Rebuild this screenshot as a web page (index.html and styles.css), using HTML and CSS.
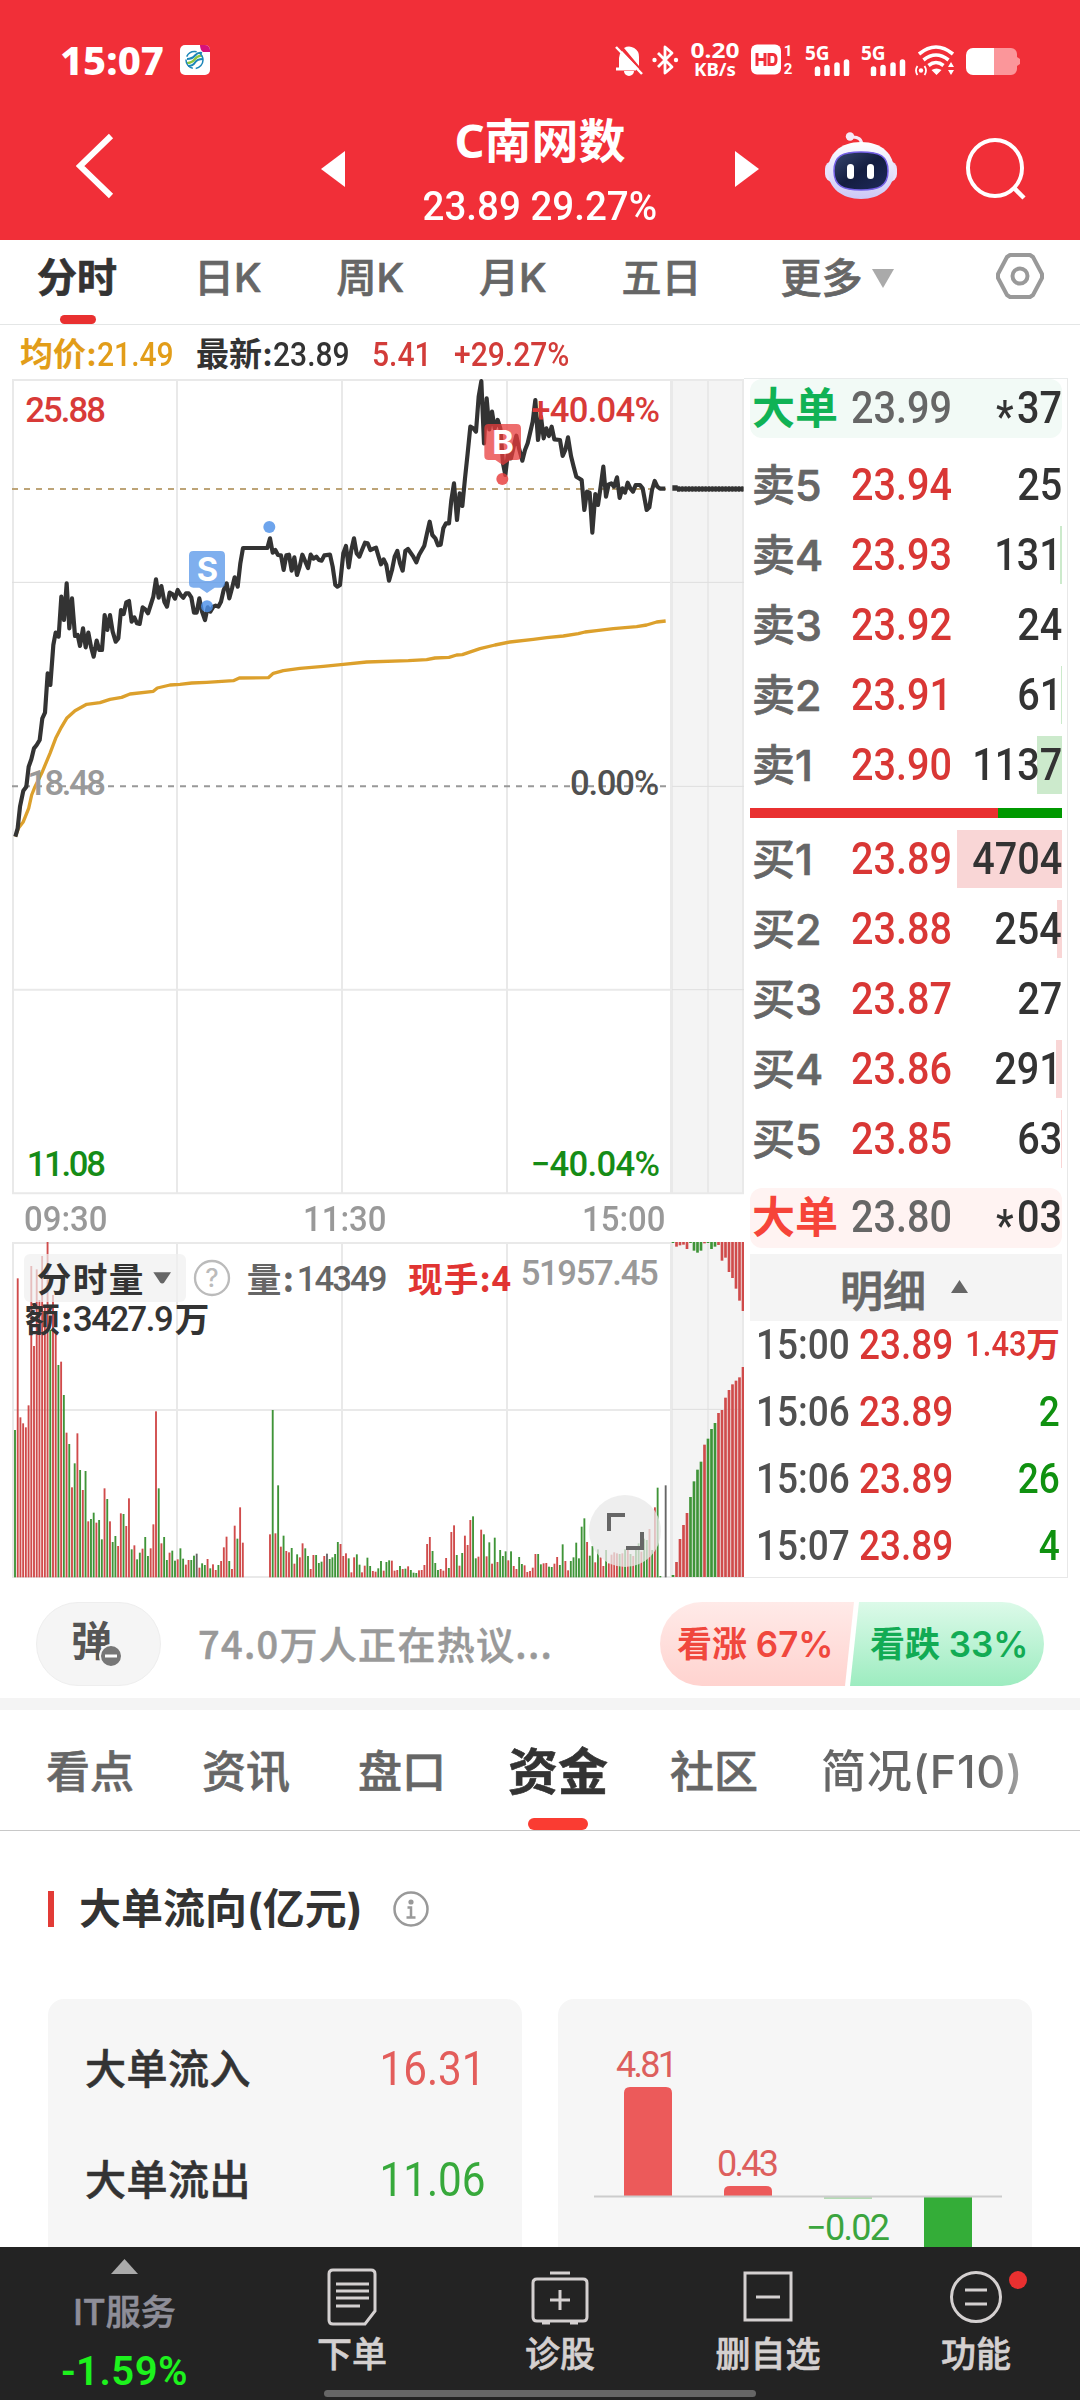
FILE: index.html
```html
<!DOCTYPE html>
<html lang="zh-CN">
<head>
    <meta charset="UTF-8">
    <meta name="viewport" content="width=device-width, initial-scale=1.0">
    <title>C南网数</title>
    <link rel="stylesheet" href="styles.css">
</head>
<body>
    <header class="header">
        <div class="status-bar">
            <span class="clock">15:07</span>
            <svg class="app-icon" width="30" height="30" viewBox="0 0 30 30">
                <rect width="30" height="30" rx="5" fill="#fff"/>
                <path d="M20 0h5a5 5 0 0 1 5 5v2h-7q-3-2-3-7z" fill="#d6127a"/>
                <path d="M7 14q5 0 8-3.500t7-2.500M8 21q5 0 7-3.500t8-3.500" stroke="#1c86b8" stroke-width="2" fill="none"/>
                <path d="M7 18q5 0 8-4t7-3" stroke="#8cc63f" stroke-width="2.200" fill="none"/>
                <circle cx="14.500" cy="15" r="8.500" fill="none" stroke="#1c86b8" stroke-width="1.500" stroke-dasharray="12 3"/>
            </svg>
            <div class="status-icons">
                <svg width="28" height="31" viewBox="0 0 28 31">
                    <path d="M4 24V13a10 10 0 0 1 3-7l17 18zM9 3a10 10 0 0 1 15 9v9zM9 26h10a5 5 0 0 1-10 0z" fill="#fff"/>
                    <path d="M1 24h20" stroke="#fff" stroke-width="3"/>
                    <path d="M1 2l26 27" stroke="#fff" stroke-width="2.500"/>
                </svg>
                <svg class="bt" width="27" height="31" viewBox="0 0 27 31">
                    <path d="M6 8l14 14-7 6V2l7 6L6 22" fill="none" stroke="#fff" stroke-width="2.800" stroke-linejoin="round"/>
                    <circle cx="2.500" cy="15" r="2.200" fill="#fff"/><circle cx="24" cy="15" r="2.200" fill="#fff"/>
                </svg>
                <svg class="speed" width="52" height="40" viewBox="0 0 52 40">
                    <text x="26" y="18" font-size="22" textLength="49" lengthAdjust="spacingAndGlyphs">0.20</text>
                    <text x="26" y="36" font-size="18" textLength="42" lengthAdjust="spacingAndGlyphs">KB/s</text>
                </svg>
                <svg class="hd" width="44" height="32" viewBox="0 0 44 32">
                    <rect width="30" height="30" rx="6" fill="#fff" y=".5"/>
                    <path d="M6 9v13M14 9v13M6 15.500h8M18 10.500h4q3 0 3 5t-3 5h-4z" stroke="#f12f38" stroke-width="3" fill="none"/>
                    <text x="37" y="12" class="sim">1</text><text x="37" y="30" class="sim">2</text>
                </svg>
                <svg class="sig" width="46" height="31" viewBox="0 0 46 31">
                    <text x="0" y="15" class="g5">5G</text>
                    <path d="M12.500 29v-5M22 29v-6.500M32 29V20M41.500 29V17" stroke="#fff" stroke-width="5.500" stroke-linecap="round"/>
                </svg>
                <svg class="sig" width="46" height="31" viewBox="0 0 46 31">
                    <text x="0" y="15" class="g5">5G</text>
                    <path d="M12.500 29v-5M22 29v-6.500M32 29V20M41.500 29V17" stroke="#fff" stroke-width="5.500" stroke-linecap="round"/>
                </svg>
                <svg class="wifi" width="40" height="31" viewBox="0 0 40 31">
                    <path d="M4 9q17-14 34 0M8.500 15q12.500-10 25 0M13.500 20.500q7.500-6 15 0" fill="none" stroke="#fff" stroke-width="3.600"/>
                    <path d="M16.500 25l5 5 5-5q-5-3-10 0zM33 22l3-5 3 5zM33 25l3 5 3-5z" fill="#fff"/>
                    <circle cx="6" cy="25.500" r="2.200" fill="#fff"/>
                    <path d="M2.500 21q-3 4.500 0 9M9.500 21q3 4.500 0 9" fill="none" stroke="#fff" stroke-width="1.800"/>
                </svg>
                <svg class="battery" width="54" height="31" viewBox="0 0 54 31">
                    <path d="M27 3h18a6 6 0 0 1 6 6v3l3 2v5l-3 2v3a6 6 0 0 1-6 6H27z" fill="#fb969a"/>
                    <path d="M28 3H7a7 7 0 0 0-7 7v13a7 7 0 0 0 7 7h21z" fill="#fff"/>
                </svg>
            </div>
        </div>
        <div class="title-bar">
            <svg class="back" width="38" height="66" viewBox="0 0 38 66"><path d="M35 3L4 33l31 30" fill="none" stroke="#fff" stroke-width="6"/></svg>
            <svg class="prev" width="24" height="36" viewBox="0 0 24 36"><path d="M24 0v36L0 18z" fill="#fff"/></svg>
            <div class="stock">
                <div class="stock-name">C南网数</div>
                <div class="stock-quote"><span class="num">23.89 29.27%</span></div>
            </div>
            <svg class="next" width="24" height="36" viewBox="0 0 24 36"><path d="M0 0v36l24-18z" fill="#fff"/></svg>
            <svg class="robot" width="74" height="68" viewBox="0 0 74 68">
                <defs>
                    <linearGradient id="shell" x1="0" y1="0" x2="0" y2="1"><stop offset="0" stop-color="#fff"/><stop offset="1" stop-color="#ccc8f6"/></linearGradient>
                    <linearGradient id="visor" x1="0" y1="0" x2="1" y2="1"><stop offset="0" stop-color="#38476f"/><stop offset=".5" stop-color="#141d40"/><stop offset="1" stop-color="#1d2a5c"/></linearGradient>
                </defs>
                <path d="M27 5q11-1 11 9" fill="none" stroke="#f6e9f7" stroke-width="3"/>
                <circle cx="26" cy="4.500" r="4.200" fill="#f6e9f7"/>
                <rect x="1" y="29" width="72" height="21" rx="8" fill="#e9e2fa"/>
                <path d="M37 10c21 0 33 12 33 29S56 67 37 67 4 56 4 39s12-29 33-29z" fill="url(#shell)"/>
                <path d="M37 20c19 0 27 4 27 19s-9 19-27 19S10 54 10 39s8-19 27-19z" fill="url(#visor)" stroke="#7560e6" stroke-width="1.500"/>
                <rect x="23" y="32" width="7" height="15" rx="3.500" fill="#fff"/><rect x="43" y="32" width="7" height="15" rx="3.500" fill="#fff"/>
            </svg>
            <svg class="search" width="62" height="64" viewBox="0 0 62 64"><ellipse cx="30" cy="30" rx="27" ry="28" fill="none" stroke="#fff" stroke-width="4"/><path d="M48 49l11 11" stroke="#fff" stroke-width="4.500"/></svg>
        </div>
    </header>

    <nav class="period-tabs">
        <span class="period active">分时</span>
        <span class="period">日K</span>
        <span class="period">周K</span>
        <span class="period">月K</span>
        <span class="period">五日</span>
        <span class="period more">更多<svg width="22" height="19" viewBox="0 0 22 19"><path d="M0 0h22L11 19z" fill="#aaa"/></svg></span>
        <svg class="settings" width="50" height="48" viewBox="0 0 50 48"><path d="M15 3h20l3 2 9 17v4l-9 17-3 2H15l-3-2L3 26v-4l9-17z" fill="none" stroke="#999" stroke-width="4" stroke-linejoin="round"/><circle cx="25" cy="24" r="7.500" fill="none" stroke="#999" stroke-width="4"/></svg>
    </nav>

    <div class="summary">
        <span class="avg">均价:<span class="num">21.49</span></span>
        <span class="last">最新:<span class="num">23.89</span></span>
        <span class="chg"><span class="num">5.41</span></span>
        <span class="pct"><span class="num">+29.27%</span></span>
    </div>

    <main class="market">
        <section class="charts">
            <!-- 3 user units per css pixel in both charts -->
            <svg id="priceChart" width="744" height="818" viewBox="0 24 2232 2454">
                <rect x="2010" y="28" width="222" height="2443" fill="#f4f4f4"/>
                <path class="grid" d="M36 30H2232M36 1859H2010M36 2470H2232M39 30V2470M531 30V2470M1026 30V2470M1521 30V2470M2016 30V2470M2124 30V2470M2229 30V2470"/>
                <path class="grid thin" d="M36 637H2232M2016 1249H2232M2016 1859H2232"/>
                <path class="grid" d="M2013 30V2470" stroke-width="12"/>
                <path d="M36 357H2000" stroke="#bda477" stroke-width="6" stroke-dasharray="18 18"/>
                <path d="M36 1249H2000" stroke="#999" stroke-width="6" stroke-dasharray="18 18"/>
                <text class="axis" x="76" y="156" textLength="242" fill="#d83a38">25.88</text>
                <polyline id="avgLine" fill="none" stroke="#dca02c" stroke-width="10" stroke-linejoin="round"/>
                <polyline id="priceLine" fill="none" stroke="#333" stroke-width="12.500" stroke-linejoin="round"/>
                <path d="M2017 354h16M2031 357h200" stroke="#333" stroke-width="17"/>
                <path d="M2040 348h192M2040 366h192" stroke="#f4f4f4" stroke-width="3" stroke-dasharray="4 6"/>
                <text class="axis" x="82" y="1274" textLength="236" fill="#999">18.48</text>
                <text class="axis" x="80" y="2418" textLength="238" fill="#168c16">11.08</text>
                <text class="axis" x="1594" y="156" textLength="386" fill="#d83a38">+40.04%</text>
                <text class="axis" x="1710" y="1274" textLength="268" fill="#505050">0.00%</text>
                <text class="axis" x="1592" y="2418" textLength="388" fill="#168c16">−40.04%</text>
                <g fill="#4d90e8" fill-opacity=".82">
                    <circle cx="808" cy="471" r="18"/><circle cx="621" cy="709" r="18"/>
                    <path d="M580 543h82q13 0 13 13v84q0 13-13 13h-18l-23 16-23-16h-18q-13 0-13-13v-84q0-13 13-13z" fill-opacity=".72"/>
                </g>
                <g fill="#e83c3c" fill-opacity=".82">
                    <circle cx="1507" cy="327" r="18"/>
                    <path d="M1466 162h84q13 0 13 13v82q0 13-13 13h-18l-23 16-23-16h-20q-13 0-13-13v-82q0-13 13-13z" fill-opacity=".75"/>
                </g>
                <text class="mark" x="622" y="633">S</text>
                <text class="mark" x="1509" y="252">B</text>
            </svg>
            <div class="times">
                <span class="num">09:30</span><span class="num">11:30</span><span class="num">15:00</span>
            </div>
            <div class="volume">
                <svg id="volumeChart" width="744" height="340" viewBox="0 300 2232 1020">
                    <rect x="2010" y="306" width="222" height="1006" fill="#f4f4f4"/>
                    <path class="grid" d="M36 309H2010M36 810H2010M36 1311H2232M39 306V1311M531 306V1311M1026 306V1311M1521 306V1311M2016 306V1311M2124 306V1311M2229 306V1311"/>
                    <path class="grid thin" d="M2016 808H2232"/>
                    <path class="grid" d="M2013 306V1311" stroke-width="12"/>
                    <g id="bars"></g>
                    <rect x="72" y="342" width="486" height="144" rx="18" fill="#efefef" fill-opacity=".7"/>
                    <path d="M460 397h53l-20 30q-6 7-13 0z" fill="#666"/>
                    <circle cx="636" cy="414" r="51" fill="none" stroke="#bbb" stroke-width="7"/>
                    <text class="help" x="636" y="441">?</text>
                    <text class="cjk" x="110" y="455" textLength="320" fill="#333">分时量</text>
                    <text class="cjk" x="740" y="455" textLength="142" fill="#666">量:</text>
                    <text class="axis" x="890" y="452" textLength="272" fill="#666">14349</text>
                    <text class="cjk" x="1224" y="455" textLength="248" fill="#e13432">现手:</text>
                    <text class="axis bold" x="1474" y="452" textLength="54" fill="#e13432">4</text>
                    <text class="axis" x="1562" y="435" textLength="414" fill="#999">51957.45</text>
                    <text class="cjk" x="75" y="575" textLength="142" fill="#333">额:</text>
                    <text class="axis" x="219" y="572" textLength="302" fill="#333">3427.9</text>
                    <text class="cjk" x="524" y="575" fill="#333">万</text>
                </svg>
                <span class="expand"><svg width="37" height="37" viewBox="0 0 37 37"><path d="M2 18V2h16M35 19v16H19" fill="none" stroke="#666" stroke-width="4"/></svg></span>
            </div>
        </section>

        <aside class="book">
            <div class="big sell"><b>大单</b><span class="num">23.99</span><span class="num qty"><i>*</i>37</span></div>
            <div class="levels asks">
                <div class="level"><span>卖5</span><span class="num">23.94</span><span class="num qty">25</span></div>
                <div class="level"><span>卖4</span><span class="num">23.93</span><span class="num qty">131</span><i class="depth" style="width: 2px"></i></div>
                <div class="level"><span>卖3</span><span class="num">23.92</span><span class="num qty">24</span></div>
                <div class="level"><span>卖2</span><span class="num">23.91</span><span class="num qty">61</span><i class="depth" style="width: 1px"></i></div>
                <div class="level"><span>卖1</span><span class="num">23.90</span><span class="num qty">1137</span><i class="depth" style="width: 25px"></i></div>
            </div>
            <div class="ratio"></div>
            <div class="levels bids">
                <div class="level"><span>买1</span><span class="num">23.89</span><span class="num qty">4704</span><i class="depth" style="width: 105px"></i></div>
                <div class="level"><span>买2</span><span class="num">23.88</span><span class="num qty">254</span><i class="depth" style="width: 5px"></i></div>
                <div class="level"><span>买3</span><span class="num">23.87</span><span class="num qty">27</span></div>
                <div class="level"><span>买4</span><span class="num">23.86</span><span class="num qty">291</span><i class="depth" style="width: 6px"></i></div>
                <div class="level"><span>买5</span><span class="num">23.85</span><span class="num qty">63</span><i class="depth" style="width: 1px"></i></div>
            </div>
            <div class="big buy"><b>大单</b><span class="num">23.80</span><span class="num qty"><i>*</i>03</span></div>
            <div class="detail-head">明细<svg width="17" height="13" viewBox="0 0 17 13"><path d="M0 13h17L8.500 0z" fill="#666"/></svg></div>
            <div class="ticks">
                <div class="tick up"><span class="num">15:00</span><span class="num price">23.89</span><span class="small"><span class="num">1.43</span>万</span></div>
                <div class="tick"><span class="num">15:06</span><span class="num price">23.89</span><span class="num qty">2</span></div>
                <div class="tick"><span class="num">15:06</span><span class="num price">23.89</span><span class="num qty">26</span></div>
                <div class="tick"><span class="num">15:07</span><span class="num price">23.89</span><span class="num qty">4</span></div>
            </div>
        </aside>
    </main>

    <div class="talk">
        <span class="danmu">弹<svg width="24" height="24" viewBox="0 0 24 24"><circle cx="12" cy="12" r="11" fill="#777" stroke="#f5f5f5" stroke-width="2"/><path d="M6 12h12" stroke="#fff" stroke-width="3"/></svg></span>
        <span class="talk-text">74.0万人正在热议...</span>
        <div class="vote">
            <span class="vote-up">看涨 67%</span><span class="vote-down">看跌 33%</span>
        </div>
    </div>

    <nav class="info-tabs">
        <span>看点</span>
        <span>资讯</span>
        <span>盘口</span>
        <span class="active">资金</span>
        <span>社区</span>
        <span class="fade">简况(F10)</span>
    </nav>

    <section class="flow">
        <h2 class="flow-title">大单流向(亿元)
            <svg width="36" height="36" viewBox="0 0 36 36"><circle cx="18" cy="18" r="16.500" fill="none" stroke="#999" stroke-width="2.500"/><circle cx="18" cy="11" r="2.600" fill="#999"/><path d="M14.500 16.500H18V26M13.500 26.500h9" fill="none" stroke="#999" stroke-width="2.500"/></svg>
        </h2>
        <div class="cards">
            <div class="card totals">
                <div class="total"><span>大单流入</span><span class="num in">16.31</span></div>
                <div class="total"><span>大单流出</span><span class="num out">11.06</span></div>
            </div>
            <div class="card">
                <svg width="474" height="248" viewBox="0 0 474 248">
                    <path d="M66 197V94q0-6 6-6h36q6 0 6 6v103zM166 197v-5q0-5 6-5h36q6 0 6 5v5z" fill="#ec5a5a"/>
                    <path d="M366 198h48v50h-48z" fill="#34ad38"/>
                    <path d="M266 199h48" stroke="#b4dbb5" stroke-width="2"/>
                    <path d="M36 197.500h408" stroke="#ccc" stroke-width="2"/>
                    <text class="bar-label" x="58" y="78" textLength="62" fill="#dd5f5d">4.81</text>
                    <text class="bar-label" x="159" y="177" textLength="62" fill="#dd5f5d">0.43</text>
                    <text class="bar-label" x="248" y="241" textLength="84" fill="#3ba53e">−0.02</text>
                </svg>
            </div>
        </div>
    </section>

    <footer class="toolbar">
        <div class="tool index">
            <svg width="27" height="15" viewBox="0 0 27 15"><path d="M0 15h27L13.500 0z" fill="#aaa"/></svg>
            <span>IT服务</span>
            <b>-1.59%</b>
        </div>
        <div class="tool">
            <svg width="60" height="60" viewBox="0 0 60 60"><path d="M11 3h38q4 0 4 4v37L43 57H11q-4 0-4-4V7q0-4 4-4zM14 17h33M14 24h33M14 31h33M14 39h24"/></svg>
            <span>下单</span>
        </div>
        <div class="tool">
            <svg width="60" height="60" viewBox="0 0 60 60"><path d="M7 12h46q4 0 4 4v34q0 4-4 4H7q-4 0-4-4V16q0-4 4-4zM20 6h20M30 23v20M20 33h20M12 56h8M40 56h8"/></svg>
            <span>诊股</span>
        </div>
        <div class="tool">
            <svg width="60" height="60" viewBox="0 0 60 60"><path d="M7 6h46v47H7zM18 30h24"/></svg>
            <span>删自选</span>
        </div>
        <div class="tool">
            <svg width="60" height="60" viewBox="0 0 60 60"><circle cx="30" cy="30" r="24.500"/><path d="M19 23h22M19 37h22"/></svg>
            <span>功能</span>
            <i class="badge"></i>
        </div>
        <div class="home-bar"></div>
    </footer>

    <script>
        const NS = 'http://www.w3.org/2000/svg';

        // Price per minute
        const price = '46,1400 53,1375 60,1310 70,1262 79,1250 86,1190 94,1168 102,1135 110,1125 119,1110 127,1045 135,1028 143,910 151,945 160,825 167,788 176,800 184,680 192,750 200,640 208,775 216,685 225,798 233,795 240,828 249,775 257,832 265,788 273,830 281,860 290,812 298,840 306,840 314,735 322,780 330,735 338,785 347,815 355,805 363,720 371,732 379,697 387,693 395,755 403,742 411,760 419,762 428,712 436,718 444,730 452,705 460,680 468,628 476,683 484,648 493,695 501,710 509,668 517,672 525,686 533,660 542,675 550,683 558,670 566,670 574,682 582,728 590,728 598,685 606,725 615,750 623,712 631,725 640,710 647,707 655,710 663,695 671,660 680,640 688,685 696,655 704,622 713,650 721,580 729,534 802,534 810,505 818,548 826,540 834,555 843,556 851,600 859,556 867,554 875,602 883,562 891,615 899,590 907,554 916,575 924,594 932,554 940,566 949,560 957,570 965,572 973,556 990,554 998,590 1006,645 1012,650 1020,645 1030,550 1038,528 1046,592 1054,540 1062,505 1070,550 1078,560 1086,540 1095,518 1103,520 1111,540 1128,533 1136,560 1143,583 1151,568 1159,585 1167,632 1176,600 1184,560 1192,543 1200,580 1208,602 1216,543 1224,537 1240,560 1249,577 1257,555 1273,527 1281,490 1289,455 1297,495 1306,505 1314,526 1322,524 1330,475 1338,460 1347,460 1354,390 1362,340 1371,450 1379,370 1387,408 1395,325 1403,250 1411,170 1420,175 1428,185 1436,80 1444,33 1452,220 1460,85 1468,178 1476,125 1484,175 1493,150 1501,175 1509,280 1516,315 1525,240 1533,265 1541,230 1549,197 1557,235 1567,272 1575,240 1583,220 1590,190 1598,155 1606,90 1614,210 1623,140 1631,205 1639,175 1647,198 1655,170 1663,208 1680,210 1688,258 1696,240 1704,202 1713,258 1721,290 1729,320 1745,330 1753,420 1761,365 1769,368 1777,488 1786,372 1794,405 1802,350 1810,290 1818,380 1826,343 1834,340 1842,350 1851,322 1859,384 1867,355 1875,368 1883,338 1891,355 1899,365 1907,345 1920,345 1928,355 1940,420 1948,412 1956,360 1964,333 1972,350 1980,356 1996,356';
        const average = '46,1400 55,1375 70,1355 86,1315 95,1275 105,1250 125,1210 150,1150 167,1105 184,1072 200,1045 225,1022 260,1003 300,998 330,988 365,982 390,972 460,964 472,954 510,945 540,943 575,939 620,937 700,932 718,924 805,923 820,910 850,902 900,895 970,889 1030,883 1100,876 1225,872 1280,869 1305,864 1347,862 1370,855 1387,854 1440,836 1485,825 1530,816 1600,808 1640,803 1690,798 1735,791 1755,786 1790,782 1840,776 1910,770 1940,765 1970,756 1997,753';
        document.getElementById('priceLine').setAttribute('points', price);
        document.getElementById('avgLine').setAttribute('points', average);

        // Volume: start x, then colour and top of each bar
        const sessions = [
            [45, 'g870 r415 r832 r850 r862 r796 r378 r618 r388 r480 r348 r500 r306 g570 r465 r575 g675 r665 g765 r878 g912 r1042 g970 r880 g990 r1050 g993 r1144 g1137 g1118 r1148 g1140 g1198 r1045 g1077 r1144 g1206 g1188 r1218 r1120 g1122 r1158 r1075 g1228 r1216 g1258 g1238 r1226 g1191 g1248 r1225 r1153'],
            [468, 'r814 g1045 r1210 g1191 g1260 r1238 g1232 g1262 r1258 g1225 g1256 r1274 r1260 g1260 g1247 k1241 r1283 g1270 g1275 r1257 g1285 r1273 r1290 g1275 r1263 r1222 r1190 g1263 r1287 r1157 g1196 r1102 r1208'],
            [810, 'r1183 g810 r1180 g1036 r1220 g1187 r1233 r1237 g1224 r1271 g1243 r1252 r1210 g1225 g1248 r1287 r1245 g1245 g1269 g1265 r1248 k1241 g1257 g1252 g1242 g1206 r1212 r1248 r1240 g1255 r1297 r1252 g1243 g1274'],
            [1086, 'r1297 r1277 g1253 g1278 r1293 r1295 g1285 g1263 r1292 g1266 g1261 r1262 r1292 r1290 g1278 r1287 g1286 r1279 g1290 g1298 g1299 r1291 r1290 r1275 r1212 r1191 g1233 g1269 g1290 r1287 r1292 r1254 g1284'],
            [1354, 'r1176 r1156 g1245 r1277 g1239 r1187 r1215 r1140 g1129 g1255 r1250 r1169 g1183 r1249 g1207 r1271 g1193 r1266 g1230 g1248 g1234 r1261 g1234 r1278 r1287 g1251 g1272 r1276 r1296 r1293 r1283 r1242 g1242 g1273 r1270 r1269 g1280 g1281 r1271 r1251 g1275'],
            [1688, 'g1213 r1263 r1291 g1263 g1252 g1208 g1255 g1160 g1135 r1206 g1247 g1218 r1267 g1228 r1252 r1278 g1230 r1270 r1244 r1237 r1240 g1242 r1240 g1228 r1228 g1242 r1248 g1228 g1210 r1235 g1196 g1200 r1167 g1230 r1102 g1043 g1308'],
            [1997, 'k1036']
        ];
        const colors = { r: '#d04b4b', g: '#3f9438', k: '#666' };
        const bars = document.getElementById('bars');

        function bar(x, y1, y2, width, color) {
            const rect = document.createElementNS(NS, 'rect');
            rect.setAttribute('x', x - width / 2);
            rect.setAttribute('y', y1);
            rect.setAttribute('width', width);
            rect.setAttribute('height', y2 - y1);
            rect.setAttribute('fill', colors[color]);
            bars.appendChild(rect);
        }

        sessions.forEach(([start, list]) => {
            list.split(' ').forEach((item, i) => {
                bar(start + i * 8.14, +item.slice(1), 1312, 5.6, item[0]);
            });
        });

        // After-hours block: bars hang from the top and rise from the bottom
        'g309 r320 r316 r314 r327 g309 g332 g338 g332 r310 g309 g327 g320 r315 r362 r353 r396 r414 r446 r482 r513'.split(' ').forEach((item, i) => {
            bar(2019 + i * 10.5, 306, +item.slice(1), 8, item[0]);
        });
        'g1305 r1266 r1197 r1155 r1119 g1071 g1024 g989 g965 r914 g896 g867 g849 r819 r810 r773 r750 r733 r722 r712 r681'.split(' ').forEach((item, i) => {
            bar(2019 + i * 10.5, +item.slice(1), 1311, 8, item[0]);
        });
    </script>
</body>
</html>
```
FILE: styles.css
```css
* {
    box-sizing: border-box;
}
body {
    margin: 0;
    width: 1080px;
    height: 2400px;
    overflow: hidden;
    display: flex;
    flex-direction: column;
    background-color: #fff;
    color: #333;
    font-family: Inter, 'Noto Sans CJK SC', sans-serif;
}
svg {
    display: block;
    flex-shrink: 0;
}
i {
    font-style: normal;
}
/* narrow figures */
.num {
    display: inline-block;
    font-family: Roboto, 'Noto Sans CJK SC', sans-serif;
    font-weight: 500;
    transform: scaleX(0.88);
    transform-origin: left center;
    white-space: pre;
    -webkit-text-stroke: 0;
}
.header {
    height: 240px;
    flex-shrink: 0;
    background-color: #f12f38;
    color: #fff;
}
.status-bar {
    display: flex;
    align-items: center;
    height: 120px;
    padding: 0 60px 0 60px;
}
.clock {
    width: 120px;
    font-family: 'Noto Sans', sans-serif;
    font-size: 40px;
    font-weight: 800;
    line-height: 40px;
}
.status-icons {
    display: flex;
    align-items: center;
    margin-left: auto;
}
.bt {
    margin-left: 9px;
}
.speed {
    margin-left: 10px;
    font-family: 'Noto Sans', sans-serif;
    font-weight: 700;
    fill: #fff;
    text-anchor: middle;
}
.hd {
    margin-left: 10px;
}
.sim {
    font: 700 15px Roboto, sans-serif;
    fill: #fff;
    text-anchor: middle;
}
.g5 {
    font: 700 19px 'Noto Sans', sans-serif;
    fill: #fff;
}
.sig {
    margin-left: 10px;
}
.wifi {
    margin-left: 8px;
}
.battery {
    margin-left: 11px;
}
.title-bar {
    display: flex;
    align-items: center;
    height: 120px;
    padding-left: 76px;
}
.back {
    margin-top: -29px;
}
.prev {
    margin: -23px 0 0 207px;
}
.stock {
    width: 390px;
    text-align: center;
}
.stock-name {
    margin-top: -14px;
    font-family: 'Noto Sans', 'Noto Sans CJK SC', sans-serif;
    font-size: 47px;
    font-weight: 700;
    line-height: 60px;
}
.stock-quote {
    font-size: 41px;
    line-height: 62px;
    margin-top: 4px;
}
.stock-quote .num {
    transform: scaleX(0.94);
    transform-origin: center;
}
.next {
    margin-top: -23px;
}
.robot {
    margin: -29px 0 0 65px;
}
.search {
    margin: -20px 0 0 67px;
}
.period-tabs {
    display: flex;
    height: 85px;
    flex-shrink: 0;
    padding-left: 37px;
    border-bottom: 1px solid #e4e6e6;
    font-size: 40px;
    line-height: 76px;
    font-weight: 500;
    color: #666;
    -webkit-text-stroke: 0.7px;
}
.period {
    position: relative;
    margin-right: 75px;
    white-space: nowrap;
}
.period.active {
    color: #333;
    font-weight: 700;
    margin-right: 77px;
}
.period.active::after {
    content: '';
    position: absolute;
    left: 23px;
    bottom: 0;
    width: 36px;
    height: 9px;
    border-radius: 5px;
    background-color: #e93030;
}
.period.more {
    display: flex;
    align-items: center;
    gap: 9px;
    height: 76px;
    margin: 0 0 0 4px;
    font-size: 41px;
}
.settings {
    margin: 12px 35px 0 auto;
}
.summary {
    display: grid;
    grid-template-columns: 176px 176px 82px 1fr;
    height: 53px;
    flex-shrink: 0;
    padding-left: 20px;
    font-size: 33px;
    font-weight: 700;
    line-height: 59px;
    white-space: nowrap;
}
.summary .num {
    transform: scaleX(0.91);
}
.avg {
    color: #e29d19;
}
.chg, .pct {
    color: #d23c39;
}
.market {
    display: flex;
    height: 1202px;
    flex-shrink: 0;
}
.charts {
    width: 744px;
}
.grid {
    fill: none;
    stroke: #e9e9e9;
    stroke-width: 6;
}
.grid.thin {
    stroke-width: 3;
    stroke: #dedede;
}
.axis {
    font: 500 104px Roboto, sans-serif;
}
.axis.bold {
    font-weight: 700;
}
.cjk {
    font: 700 104px 'Noto Sans CJK SC', sans-serif;
}
.mark {
    font: 700 98px Inter, sans-serif;
    fill: #fff;
    text-anchor: middle;
}
.help {
    font: 500 76px Inter, sans-serif;
    fill: #bbb;
    text-anchor: middle;
}
.times {
    display: flex;
    justify-content: space-between;
    height: 44px;
    padding: 0 73px 0 24px;
    font-size: 35px;
    line-height: 47px;
    color: #999;
}
.times .num {
    transform: scaleX(0.94);
}
.volume {
    position: relative;
}
.expand {
    position: absolute;
    left: 589px;
    top: 255px;
    display: flex;
    align-items: center;
    justify-content: center;
    width: 72px;
    height: 72px;
    border-radius: 50%;
    background-color: rgba(232, 232, 232, 0.75);
}
.book {
    width: 324px;
    height: 1200px;
    padding: 0 5px 0 6px;
    border-top: 1px solid #e8ebeb;
    border-right: 1px solid #e8e8e8;
    border-bottom: 1px solid #e8e8e8;
}
.big, .level {
    position: relative;
    display: grid;
    grid-template-columns: 99px 98px minmax(0, 1fr);
    padding-left: 2px;
    white-space: nowrap;
}
.big {
    height: 59px;
    border-radius: 12px;
    font-size: 43px;
    line-height: 58px;
}
.big b {
    font-weight: 700;
}
.big .num {
    font-size: 45px;
    color: #666;
}
.big .num.qty {
    color: #333;
}
.big .qty i {
    position: relative;
    top: 9px;
    margin-right: 4px;
}
.big.sell {
    background-color: #f2faf6;
}
.big.sell b {
    color: #10b255;
}
.big.buy {
    height: 60px;
    margin-top: 20px;
    background-color: #fff3f2;
}
.big.buy b {
    color: #f64439;
}
.levels {
    display: grid;
    grid-template-columns: 100%;
    gap: 12px;
}
.asks {
    margin-top: 18px;
}
.bids {
    margin-top: 12px;
}
.level {
    height: 58px;
    font-size: 43px;
    font-weight: 500;
    line-height: 58px;
    color: #666;
    -webkit-text-stroke: 0.7px;
}
.level .num {
    font-size: 45px;
    color: #d93735;
}
.num.qty {
    justify-self: end;
    transform-origin: right center;
}
.level .num.qty {
    z-index: 1;
    color: #333;
}
.depth {
    position: absolute;
    right: 0;
    top: 0;
    height: 58px;
}
.asks .depth {
    background-color: #cceacc;
}
.bids .depth {
    background-color: #f9d6d6;
}
.ratio {
    height: 10px;
    margin-top: 14px;
    background: linear-gradient(90deg, #e93030 248px, #009900 248px);
}
.detail-head {
    display: flex;
    align-items: center;
    height: 67px;
    margin-top: 6px;
    padding: 0 0 0 90px;
    background-color: #f4f4f4;
    color: #666;
    font-size: 43px;
    font-weight: 500;
    -webkit-text-stroke: 0.8px;
}
.detail-head svg {
    margin-left: 25px;
    margin-top: -2px;
}
.ticks {
    padding: 0 2px 0 6px;
}
.tick {
    display: grid;
    grid-template-columns: 103px 90px minmax(0, 1fr);
    height: 67px;
    font-size: 42px;
    line-height: 47px;
    white-space: nowrap;
    color: #505050;
}
.tick .price {
    color: #d93735;
}
.tick .qty {
    color: #109110;
}
.tick .small {
    display: flex;
    justify-content: flex-end;
    color: #dc3735;
    font-size: 34px;
    font-weight: 700;
}
.small .num {
    font-size: 35px;
    transform-origin: right center;
}
.talk {
    display: flex;
    align-items: center;
    height: 130px;
    flex-shrink: 0;
    padding: 0 36px;
    border-bottom: 12px solid #f4f4f4;
}
.danmu {
    position: relative;
    width: 125px;
    height: 84px;
    margin-top: 10px;
    padding-left: 34px;
    border: 1px solid #eee;
    border-radius: 42px;
    background-color: #f5f5f5;
    color: #555;
    font-size: 41px;
    font-weight: 700;
    line-height: 76px;
}
.danmu svg {
    position: absolute;
    left: 62px;
    top: 41px;
}
.talk-text {
    margin: 7px 0 0 37px;
    font-family: 'Noto Sans CJK SC', sans-serif;
    font-size: 38px;
    font-weight: 500;
    letter-spacing: 1.3px;
    color: #999;
    -webkit-text-stroke: 0.5px;
    white-space: nowrap;
}
.vote {
    display: flex;
    width: 384px;
    height: 84px;
    margin: 10px 0 0 auto;
    font-size: 35px;
    font-weight: 600;
    line-height: 84px;
    white-space: nowrap;
}
.vote-up {
    width: 194px;
    padding-left: 17px;
    border-radius: 42px 0 0 42px;
    clip-path: polygon(0 0, 100% 0, 185px 100%, 0 100%);
    background: linear-gradient(#ffeae8, #ffd3cf);
    color: #f0473d;
}
.vote-down {
    width: 194px;
    margin-left: -4px;
    padding-left: 20px;
    border-radius: 0 42px 42px 0;
    clip-path: polygon(9px 0, 100% 0, 100% 100%, 0 100%);
    background: linear-gradient(#dcfae9, #9decc0);
    color: #12ab54;
}
.info-tabs {
    display: flex;
    height: 121px;
    flex-shrink: 0;
    padding-left: 46px;
    gap: 68px;
    border-bottom: 1px solid #c8c8c8;
    font-size: 44px;
    font-weight: 500;
    line-height: 124px;
    color: #666;
    white-space: nowrap;
    -webkit-text-stroke: 0.6px;
}
.info-tabs .active {
    position: relative;
    margin: 0 -6px 0 -6px;
    font-size: 50px;
    font-weight: 700;
    color: #333;
}
.info-tabs .active::after {
    content: '';
    position: absolute;
    left: 20px;
    bottom: 0;
    width: 60px;
    height: 12px;
    border-radius: 6px;
    background-color: #fa3c32;
}
.info-tabs .fade {
    margin-left: -5px;
    background: linear-gradient(90deg, #666 160px, #bbb 215px);
    -webkit-background-clip: text;
    background-clip: text;
    color: transparent;
    font-size: 45px;
    letter-spacing: 0.7px;
    -webkit-text-stroke: 0;
}
.flow {
    height: 416px;
    overflow: hidden;
    padding: 0 48px;
}
.flow-title {
    display: flex;
    align-items: center;
    gap: 30px;
    margin: 60px 0 0;
    height: 36px;
    padding-left: 25px;
    border-left: 6px solid #e23b36;
    font-size: 42px;
    font-weight: 700;
    line-height: 34px;
}
.cards {
    display: grid;
    grid-template-columns: 1fr 1fr;
    gap: 36px;
    margin-top: 72px;
}
.card {
    height: 300px;
    border-radius: 16px;
    background-color: #f6f6f6;
}
.totals {
    padding: 14px 36px 0 37px;
}
.total {
    display: flex;
    justify-content: space-between;
    height: 111px;
    font-size: 41px;
    font-weight: 500;
    letter-spacing: 0.5px;
    line-height: 112px;
    -webkit-text-stroke: 0.6px;
}
.total .num {
    font-size: 48px;
    font-weight: 400;
    letter-spacing: 0;
    transform-origin: right center;
}
.in {
    color: #e35d5b;
}
.out {
    color: #37a93b;
}
.bar-label {
    font: 400 36px Roboto, sans-serif;
}
.toolbar {
    position: relative;
    display: grid;
    grid-template-columns: 248px 208px 208px 208px 208px;
    height: 153px;
    flex-shrink: 0;
    background-color: #232323;
    color: #d4d0d0;
}
.tool {
    position: relative;
    display: flex;
    flex-direction: column;
    align-items: center;
    padding-top: 20px;
    font-size: 35px;
    font-weight: 500;
    line-height: 54px;
    -webkit-text-stroke: 0.6px;
}
.tool svg {
    fill: none;
    stroke: #d4d0d0;
    stroke-width: 3;
}
.tool.index {
    padding: 12px 0 0 1px;
    color: #8e8e98;
}
.index svg {
    stroke: none;
}
.index span {
    margin-top: 11px;
}
.index b {
    margin-top: 6px;
    color: #1df21d;
    font-family: Roboto, sans-serif;
    font-size: 40px;
    font-weight: 600;
    letter-spacing: 0.5px;
    -webkit-text-stroke: 0;
}
.badge {
    position: absolute;
    left: 137px;
    top: 24px;
    width: 18px;
    height: 18px;
    border-radius: 50%;
    background-color: #e93030;
}
.home-bar {
    position: absolute;
    left: 324px;
    bottom: 3px;
    width: 432px;
    height: 7px;
    border-radius: 4px;
    background-color: #666;
}
```
